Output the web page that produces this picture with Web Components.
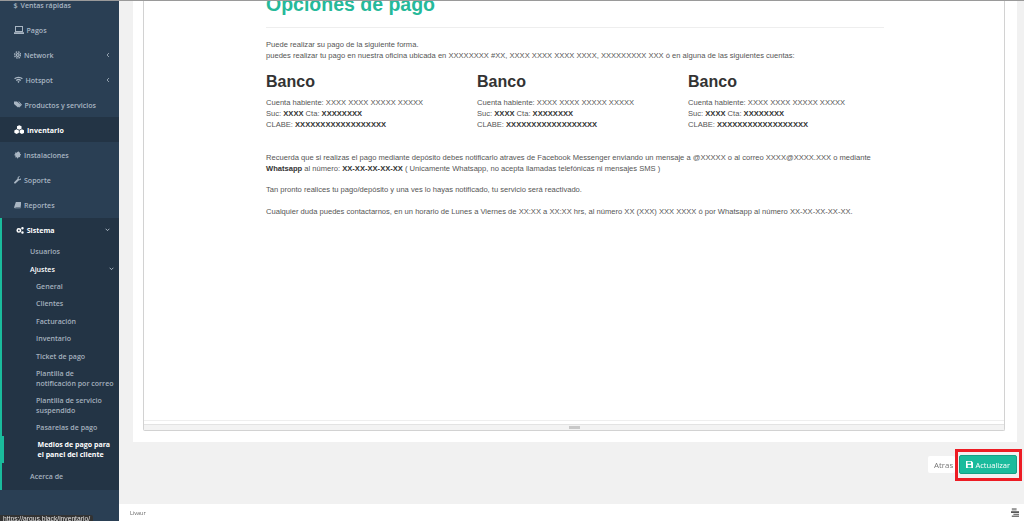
<!DOCTYPE html>
<html><head><meta charset="utf-8">
<style>
html,body{margin:0;height:521px;overflow:hidden;background:#f1f1f1}
body{font-family:"Open Sans",sans-serif}
app-shell{height:521px}
</style></head>
<body>
<template id="t-shell"><style>
:host{display:flex;width:1024px;overflow:hidden;position:relative;filter:blur(.3px)}
main{flex:1;display:flex;flex-direction:column;min-width:0}
.body{flex:1;min-height:0;padding:0 7px 0 14px;display:flex;flex-direction:column}
.actions{display:flex;justify-content:flex-end;align-items:center;gap:4px;margin-top:13px}
</style><slot name="side"></slot><main><div class="body"><slot name="panel"></slot><div class="actions"><slot name="actions"></slot></div></div><slot name="foot"></slot></main><slot name="over"></slot></template>

<template id="t-side"><style>
:host{display:block;width:119px;flex:none;background:#2a3f54;height:521px;overflow:hidden}
.in{margin-top:-8px;display:flex;flex-direction:column}
</style><div class="in"><slot></slot></div></template>

<template id="t-item"><style>
:host{display:flex;align-items:center;height:25px;padding-left:13.5px;padding-right:9px;font:600 7.05px "Open Sans",sans-serif;color:#a9b6c3;gap:3px;box-sizing:border-box}
:host([active]){background:#233445;color:#fff;font-weight:700}
:host([open]){color:#fff;font-weight:700;height:25px;padding-left:13.7px}
.l{flex:1;white-space:nowrap}
</style><slot name="i"></slot><span class="l"><slot></slot></span><slot name="c"></slot></template>

<template id="t-group"><style>
:host{display:block;background:#233445;border-left:2px solid #1abb9c;margin-top:.5px}
</style><slot></slot></template>

<template id="t-sub"><style>
:host{display:flex;align-items:center;font:600 7.05px/10px "Open Sans",sans-serif;color:#a3b0bd;padding:0 5px 0 28px;height:17.4px;box-sizing:border-box;white-space:nowrap}
:host([lvl="3"]){padding-left:34px}
:host([wrap]){height:27px}
:host([cur]){color:#fff;font-weight:700;margin-left:-2px;border-left:4.500px solid #1abb9c;padding-left:33.500px}
:host([bright]){color:#fff}
:host([tall]){height:27.400px}
.l{flex:1}
</style><span class="l"><slot></slot></span><slot name="c"></slot></template>

<template id="t-panel"><style>
:host{display:block;background:#fff;height:442px;padding:0 12px 11px 10px;box-sizing:border-box;flex:none}
.frame{height:100%;box-sizing:border-box;border:1px solid #d2d2d2;border-top:0;border-radius:0 0 2px 2px;display:flex;flex-direction:column}
.doc{flex:1;min-height:0;overflow:hidden;padding:0 122px;border-bottom:1px solid #eee}
.bar{height:6px;box-sizing:border-box;flex:none;background:#f3f3f3;border-top:1px solid #e3e3e3;display:flex;justify-content:center;align-items:center;margin-top:3px}
.bar i{display:block;width:11px;height:3px;background:#c8c8c8}
</style><div class="frame"><div class="doc"><slot></slot></div><div class="bar"><i></i></div></div></template>

<template id="t-doc"><style>
:host{display:block;font:7.59px/11px "Liberation Sans",Arial,sans-serif;color:#555;width:640px}
h1{margin:-9px 0 0;font:700 19.5px/26px "Liberation Sans",Arial,sans-serif;color:#26b99a;white-space:nowrap}
hr{border:0;border-top:1px solid #eee;margin:10px 0 0;width:618px}
p{margin:0;white-space:nowrap}
.intro{margin-top:10.500px}
.cols{display:grid;grid-template-columns:211px 211px 211px;margin-top:11.500px}
.notes{margin-top:21.500px}
.notes p+p{margin-top:10.500px}
b{color:#333}
</style>
<h1>Opciones de pago</h1><hr>
<p class="intro">Puede realizar su pago de la siguiente forma.<br>puedes realizar tu pago en nuestra oficina ubicada en XXXXXXXX #XX, XXXX XXXX XXXX XXXX, XXXXXXXXX XXX ó en alguna de las siguientes cuentas:</p>
<div class="cols"><slot name="bank"></slot></div>
<div class="notes">
<p>Recuerda que si realizas el pago mediante depósito debes notificarlo atraves de Facebook Messenger enviando un mensaje a @XXXXX o al correo XXXX@XXXX.XXX o mediante<br><b>Whatsapp</b> al número: <b>XX-XX-XX-XX-XX</b> ( Unicamente Whatsapp, no acepta llamadas telefónicas ni mensajes SMS )</p>
<p>Tan pronto realices tu pago/depósito y una ves lo hayas notificado, tu servicio será reactivado.</p>
<p>Cualquier duda puedes contactarnos, en un horario de Lunes a Viernes de XX:XX a XX:XX hrs, al número XX (XXX) XXX XXXX ó por Whatsapp al número XX-XX-XX-XX-XX.</p>
</div></template>

<template id="t-bank"><style>
:host{display:block;font:7.59px/11px "Liberation Sans",Arial,sans-serif;color:#555;white-space:nowrap}
h2{margin:0 0 5px;font:700 16px/20px "Liberation Sans",Arial,sans-serif;color:#333}
b{color:#333}
</style><h2>Banco</h2>Cuenta habiente: XXXX XXXX XXXXX XXXXX<br>Suc: <b>XXXX</b> Cta: <b>XXXXXXXX</b><br>CLABE: <b>XXXXXXXXXXXXXXXXXX</b></template>

<template id="t-btn"><style>
:host{display:inline-flex;align-items:center;gap:2.500px;box-sizing:border-box;font:400 7.9px "Open Sans",sans-serif;height:17px;width:27px;padding:0 0 0 6px;background:#fff;color:#777;border-radius:2px;white-space:nowrap}
:host([primary]){height:19px;width:58px;justify-content:center;padding:0;background:#1abb9c;color:#fff;border:1px solid #169f85;font-size:7.6px}
</style><slot name="i"></slot><slot></slot></template>

<template id="t-foot"><style>
:host{display:flex;justify-content:space-between;align-items:center;height:17px;background:#fff;padding:0 5px 0 11px;font:400 5.5px "Open Sans",sans-serif;color:#666}
</style><slot></slot></template>

<template id="t-tip"><style>
:host{position:absolute;left:0;bottom:0;height:6px;padding:0 3px;background:#333;color:#e6e6e6;font:400 6.700px/7px "Liberation Sans",Arial,sans-serif;overflow:hidden;z-index:4;border-radius:0 2px 0 0;white-space:nowrap}
</style><slot></slot></template>

<template id="t-mark"><style>
:host{position:absolute;left:955px;top:449px;width:67px;height:32px;box-sizing:border-box;border:3px solid #ed1c24;z-index:4}
</style></template>

<app-shell>
<side-bar slot="side">
<nav-item><span slot="i" style="width:4px;text-align:center">$</span>Ventas rápidas</nav-item>
<nav-item><svg slot="i" viewBox="0 0 10 8" width="10" height="8" fill="currentColor"><path d="M1 0h8v6H1zM2 1v4h6V1zM0 6.300h10V8H0z" fill-rule="evenodd"/></svg>Pagos</nav-item>
<nav-item><svg slot="i" viewBox="0 0 12 12" width="7.500" height="8" fill="none" stroke="currentColor"><circle cx="6" cy="6" r="2.300" stroke-width="2"/><circle cx="6" cy="6" r="5" stroke-width="2.200" stroke-dasharray="2.400 1.530"/></svg>Network<svg slot="c" viewBox="0 0 6 8" width="4" height="6" fill="none" stroke="currentColor" stroke-width="1.200"><path d="M4.500 1L1.500 4l3 3"/></svg></nav-item>
<nav-item><svg slot="i" viewBox="0 0 12 9" width="9" height="7" fill="none" stroke="currentColor" stroke-width="1.700"><path d="M.8 3.400C3.500.9 8.500.9 11.200 3.400"/><path d="M3 5.700C4.800 4.300 7.200 4.300 9 5.700"/><path d="M6 6.500l1.500 1L6 9 4.500 7.500z" fill="currentColor" stroke="none"/></svg>Hotspot<svg slot="c" viewBox="0 0 6 8" width="4" height="6" fill="none" stroke="currentColor" stroke-width="1.200"><path d="M4.500 1L1.500 4l3 3"/></svg></nav-item>
<nav-item><svg slot="i" viewBox="0 0 12 9" width="8" height="7" fill="currentColor"><path d="M0 0h4.500L10 4.800 6 9 0 3.600zM6.200 0h1.300L12 4.800 8 9l-1-.7L10.200 4.800z"/></svg>Productos y servicios</nav-item>
<nav-item active><svg slot="i" viewBox="0 0 12 10" width="10.500" height="9" fill="currentColor"><path d="M6 0l2.600 1.300v2.900L6 5.400 3.400 4.200V1.300zM3 4.700l2.600 1.300v2.800L3 10 .4 8.800V6zM9 4.700l2.600 1.300v2.800L9 10 6.400 8.800V6z"/></svg>Inventario</nav-item>
<nav-item><svg slot="i" viewBox="0 0 12 12" width="7.500" height="8" fill="currentColor"><path d="M7 0l1.500 2L10 1.500 9.500 4 12 5.500 9.500 7 10 9.500 7.500 9 6 12 4.500 9.500 2 10l.5-3L0 6l2-1.500L1.500 2 4 2.500z"/></svg>Instalaciones</nav-item>
<nav-item><svg slot="i" viewBox="0 0 12 12" width="7.500" height="8" fill="currentColor"><path d="M11.800 2.400L9.500 4.600 7.700 4.200 7.300 2.500 9.600.2C7.500-.4 5.300 1.200 5.700 3.900L.6 9c-.8.800-.7 1.600-.1 2.300.7.700 1.500.7 2.200 0L7.900 6.200c2.500.4 4.500-1.500 3.900-3.800z"/></svg>Soporte</nav-item>
<nav-item><svg slot="i" viewBox="0 0 12 12" width="7.500" height="8" fill="currentColor"><path d="M3 1h9l-1.700 10H1.500C.5 11 0 10 .3 9zm-.5 8l-.3 1h7.500l.2-1z" fill-rule="evenodd"/></svg>Reportes</nav-item>
<nav-group>
<nav-item open><svg slot="i" viewBox="0 0 14 12" width="8" height="7" fill="currentColor"><path d="M5 1.500a4.300 4.300 0 100 8.600 4.300 4.300 0 000-8.600zm0 2.800a1.500 1.500 0 110 3 1.500 1.500 0 010-3zM11.300 0a2.200 2.200 0 100 4.400 2.200 2.200 0 000-4.400zm0 7.200a2.200 2.200 0 100 4.400 2.200 2.200 0 000-4.400z" fill-rule="evenodd"/></svg>Sistema<svg slot="c" viewBox="0 0 8 6" width="5" height="4" fill="none" stroke="#c4cfda" stroke-width="1.300"><path d="M1 1l3 3 3-3"/></svg></nav-item>
<nav-sub>Usuarios</nav-sub>
<nav-sub bright>Ajustes<svg slot="c" viewBox="0 0 8 6" width="5" height="4" fill="none" stroke="#c4cfda" stroke-width="1.300"><path d="M1 1l3 3 3-3"/></svg></nav-sub>
<nav-sub lvl="3">General</nav-sub>
<nav-sub lvl="3">Clientes</nav-sub>
<nav-sub lvl="3">Facturación</nav-sub>
<nav-sub lvl="3">Inventario</nav-sub>
<nav-sub lvl="3">Ticket de pago</nav-sub>
<nav-sub lvl="3" wrap>Plantilla de<br>notificación por correo</nav-sub>
<nav-sub lvl="3" wrap>Plantilla de servicio<br>suspendido</nav-sub>
<nav-sub lvl="3">Pasarelas de pago</nav-sub>
<nav-sub lvl="3" wrap cur>Medios de pago para<br>el panel del cliente</nav-sub>
<nav-sub tall>Acerca de</nav-sub>
</nav-group>
</side-bar>
<doc-panel slot="panel"><pay-doc>
<bank-col slot="bank"></bank-col><bank-col slot="bank"></bank-col><bank-col slot="bank"></bank-col>
</pay-doc></doc-panel>
<act-btn slot="actions">Atras</act-btn>
<act-btn slot="actions" primary><svg slot="i" width="7" height="7" fill="currentColor" viewBox="0 0 12 12"><path d="M0 0h9.500L12 2.500V12H0zM2.500 1.200v3.500h6V1.200zM3 7v4h6V7z" fill-rule="evenodd"/></svg>Actualizar</act-btn>
<page-foot slot="foot"><span>Livaur</span><svg width="8" height="9" viewBox="0 0 10 11"><path d="M1 0h6v3H1z" fill="#999"/><path d="M0 4h10v2H0z" fill="#444"/><path d="M3 7h7v1.500H3zM1 9.200h9V11H1z" fill="#777"/></svg></page-foot>
<status-tip slot="over">https://argus.black/inventario/</status-tip>
<red-mark slot="over"></red-mark>
<div slot="over" style="position:absolute;left:0;right:0;top:0;height:1px;background:#9a9a9a;z-index:5"></div>
</app-shell>
<script>
const reg=(n,id)=>customElements.define(n,class extends HTMLElement{constructor(){super();this.attachShadow({mode:'open'}).appendChild(document.getElementById(id).content.cloneNode(true))}});
[['app-shell','t-shell'],['side-bar','t-side'],['nav-item','t-item'],['nav-group','t-group'],['nav-sub','t-sub'],['doc-panel','t-panel'],['pay-doc','t-doc'],['bank-col','t-bank'],['act-btn','t-btn'],['page-foot','t-foot'],['status-tip','t-tip'],['red-mark','t-mark']].forEach(a=>reg(a[0],a[1]));
</script>
</body></html>
